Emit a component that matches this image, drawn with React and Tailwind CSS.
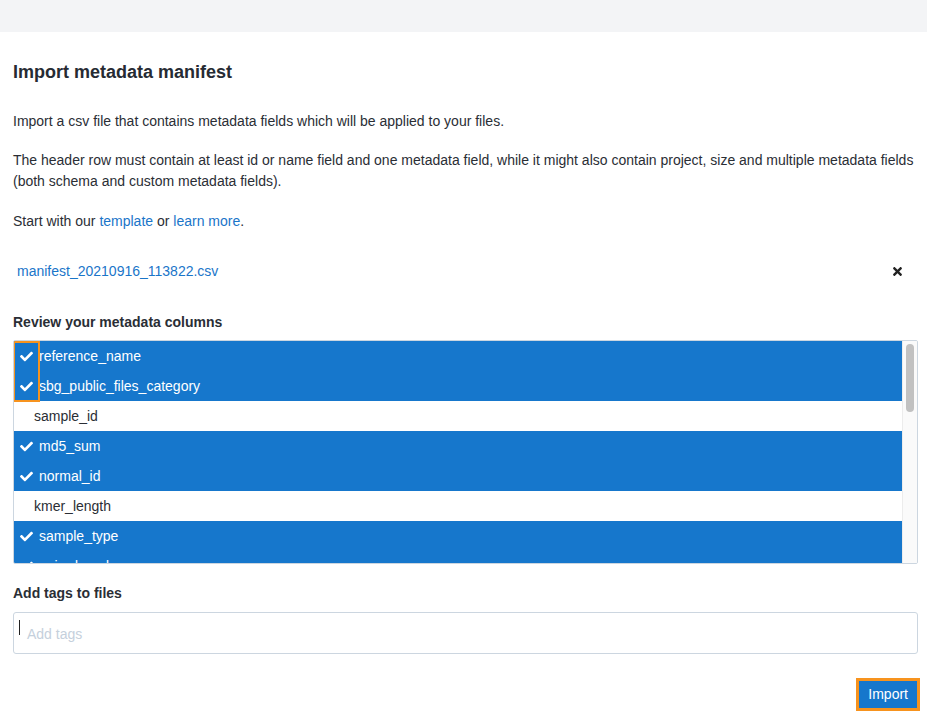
import React from "react";
import { FaCheck, FaTimes } from "react-icons/fa";

const columns = [
  { name: "reference_name", checked: true },
  { name: "sbg_public_files_category", checked: true },
  { name: "sample_id", checked: false },
  { name: "md5_sum", checked: true },
  { name: "normal_id", checked: true },
  { name: "kmer_length", checked: false },
  { name: "sample_type", checked: true },
  { name: "paired_end", checked: true },
];

function ColumnRow({ col }) {
  if (col.checked) {
    return (
      <div className="h-[30px] shrink-0 flex items-center bg-[#1677cc] text-white">
        <FaCheck className="ml-[6px] w-[13px] h-[13px]" />
        <span className="ml-[6px]">{col.name}</span>
      </div>
    );
  }
  return (
    <div className="h-[30px] shrink-0 flex items-center bg-white text-[#2a2e35]">
      <span className="ml-[20px]">{col.name}</span>
    </div>
  );
}

export default function App() {
  return (
    <div
      className="min-h-[727px] bg-white text-[14px] text-[#2a2e35]"
      style={{ fontFamily: '"Liberation Sans", Arial, sans-serif' }}
    >
      <div className="h-[32px] bg-[#f3f4f6]" />

      <div className="pl-[13px] pr-[9px] pt-[29px]">
        <h1 className="text-[18px] leading-[22px] font-bold text-[#262b33]">Import metadata manifest</h1>

        <p className="mt-[28px] leading-[21px]">
          Import a csv file that contains metadata fields which will be applied to your files.
        </p>
        <p className="mt-[18px] leading-[21px]">
          The header row must contain at least id or name field and one metadata field, while it might also contain project, size and multiple metadata fields (both schema and custom metadata fields).
        </p>
        <p className="mt-[19px] leading-[21px]">
          Start with our <a className="text-[#1a75c9]">template</a> or{" "}
          <a className="text-[#1a75c9]">learn more</a>.
        </p>

        <div className="mt-[24px] h-[30px] flex items-center justify-between">
          <a className="ml-[4px] text-[#1a75c9]">manifest_20210916_113822.csv</a>
          <FaTimes className="mr-[14px] w-[13px] h-[13px] text-[#222]" />
        </div>

        <div className="mt-[26px] font-bold leading-[20px]">Review your metadata columns</div>

        <div className="relative mt-[8px] h-[224px] border border-[#ccd6e0] rounded-[2px] flex overflow-hidden">
          <div className="flex-1 flex flex-col overflow-hidden">
            {columns.map((c) => (
              <ColumnRow key={c.name} col={c} />
            ))}
          </div>
          <div className="w-[15px] bg-[#fafafa] border-l border-[#ececec] flex justify-center">
            <div className="mt-[3px] w-[8px] h-[68px] rounded-full bg-[#c1c1c1]" />
          </div>
          <div className="absolute left-[-1px] top-0 w-[27px] h-[61px] border-2 border-[#f7931e]" />
        </div>

        <div className="mt-[19px] font-bold leading-[20px]">Add tags to files</div>

        <div className="mt-[9px] h-[42px] border border-[#ccd6e0] rounded-[3px] flex items-start">
          <div className="ml-[5px] mt-[7px] w-[1px] h-[15px] bg-[#222]" />
          <span className="ml-[7px] mt-[11px] text-[#c5d0dc] leading-[20px]">Add tags</span>
        </div>

        <div className="mt-[24px] mr-[-2px] flex justify-end">
          <div className="border-[3px] border-[#f7931e]">
            <button className="h-[27px] px-[9px] bg-[#1677cc] text-white text-[14px] leading-[27px]">
              Import
            </button>
          </div>
        </div>
      </div>
    </div>
  );
}
